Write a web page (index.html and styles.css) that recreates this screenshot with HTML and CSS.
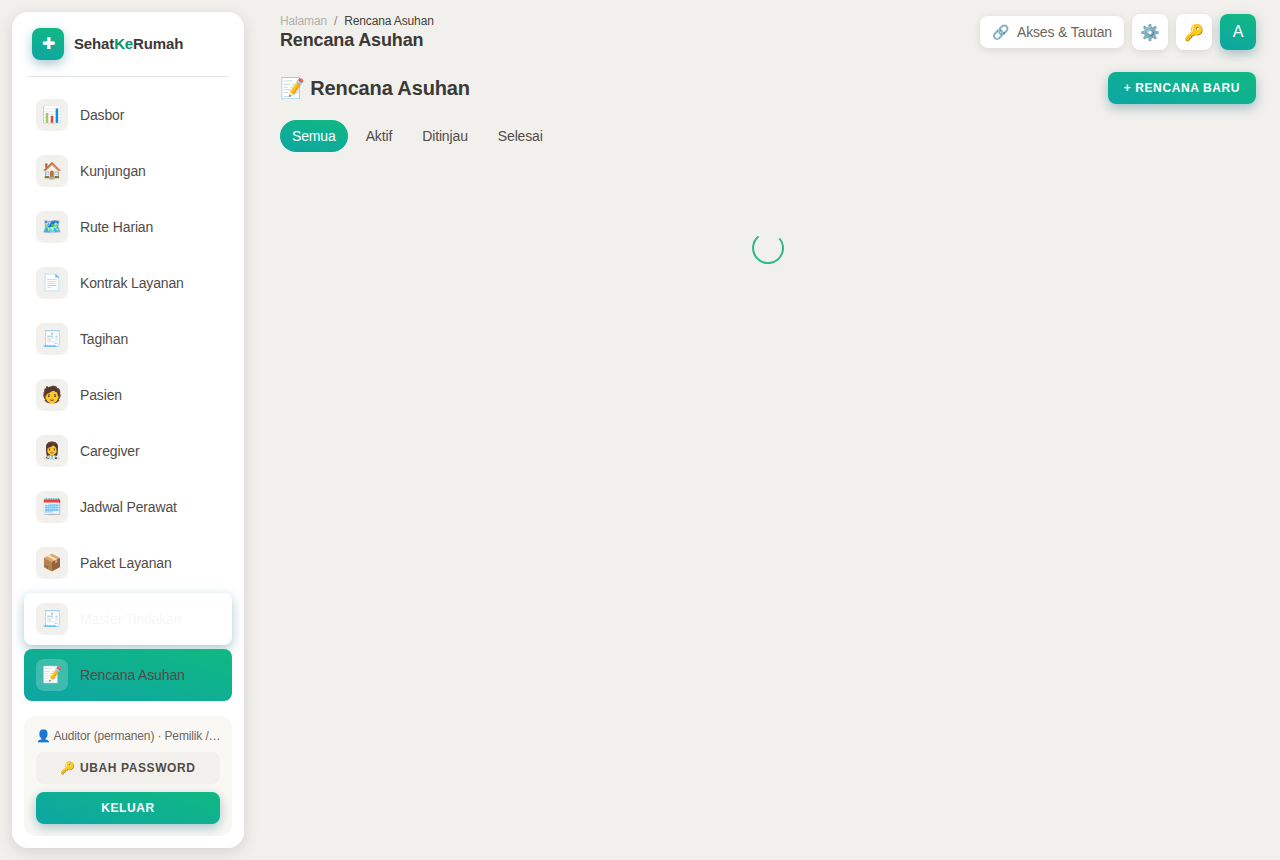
FILE: index.html
```html
<!DOCTYPE html>
<html lang="id">
<head>
    <meta charset="UTF-8">
    <meta name="viewport" content="width=device-width, initial-scale=1.0">
    <title>Rencana Asuhan - SehatKeRumah</title>
    <link rel="stylesheet" href="styles.css">
</head>
<body>

    <aside class="sidebar">
        <div class="brand">
            <span class="brand-logo">✚</span>
            <span class="brand-name">Sehat<span class="brand-accent">Ke</span>Rumah</span>
        </div>

        <nav class="menu">
            <a href="#dasbor" class="menu-item"><span class="menu-icon">📊</span>Dasbor</a>
            <a href="#kunjungan" class="menu-item"><span class="menu-icon">🏠</span>Kunjungan</a>
            <a href="#rute" class="menu-item"><span class="menu-icon">🗺️</span>Rute Harian</a>
            <a href="#kontrak" class="menu-item"><span class="menu-icon">📄</span>Kontrak Layanan</a>
            <a href="#tagihan" class="menu-item"><span class="menu-icon">🧾</span>Tagihan</a>
            <a href="#pasien" class="menu-item"><span class="menu-icon">🧑</span>Pasien</a>
            <a href="#caregiver" class="menu-item"><span class="menu-icon">👩‍⚕️</span>Caregiver</a>
            <a href="#jadwal" class="menu-item"><span class="menu-icon">🗓️</span>Jadwal Perawat</a>
            <a href="#paket" class="menu-item"><span class="menu-icon">📦</span>Paket Layanan</a>
            <a href="#tindakan" class="menu-item leaving"><span class="menu-icon">🧾</span>Master Tindakan</a>
            <a href="#rencana" class="menu-item active"><span class="menu-icon">📝</span>Rencana Asuhan</a>
        </nav>

        <div class="account">
            <div class="account-name">👤 Auditor (permanen) · Pemilik /…</div>
            <button class="btn btn-light">🔑 Ubah Password</button>
            <button class="btn btn-primary">Keluar</button>
        </div>
    </aside>

    <main class="content">
        <header class="topbar">
            <div>
                <div class="breadcrumb">
                    <a href="#halaman">Halaman</a>
                    <span class="separator">/</span>
                    <span>Rencana Asuhan</span>
                </div>
                <div class="topbar-title">Rencana Asuhan</div>
            </div>
            <div class="topbar-actions">
                <button class="link-button"><span>🔗</span><span>Akses &amp; Tautan</span></button>
                <button class="icon-button" aria-label="Pengaturan">⚙️</button>
                <button class="icon-button" aria-label="Ubah password">🔑</button>
                <button class="icon-button avatar" aria-label="Akun">A</button>
            </div>
        </header>

        <div class="page-head">
            <h1>📝 Rencana Asuhan</h1>
            <button class="btn btn-primary">+ Rencana Baru</button>
        </div>

        <div class="filters">
            <button class="filter selected">Semua</button>
            <button class="filter">Aktif</button>
            <button class="filter">Ditinjau</button>
            <button class="filter">Selesai</button>
        </div>

        <div class="loading">
            <svg class="spinner" viewBox="0 0 32 32" role="status" aria-label="Memuat">
                <path d="M6.5 4.5A15 15 0 1 0 27.4 6.3" />
            </svg>
        </div>
    </main>

</body>
</html>
```

FILE: styles.css
```css
* {
    box-sizing: border-box;
}

body {
    font-family: "Liberation Sans", Arial, sans-serif;
    font-size: 14px;
    line-height: 20px;
    letter-spacing: -0.01em;
    display: flex;
    min-height: 100vh;
    margin: 0;
    background: #f2f0ec;
    color: #44403c;
}

a {
    color: inherit;
    text-decoration: none;
}

button {
    font-family: inherit;
    letter-spacing: inherit;
    border: none;
    cursor: pointer;
}

/* Sidebar */
.sidebar {
    position: sticky;
    top: 12px;
    display: flex;
    flex-direction: column;
    flex-shrink: 0;
    width: 232px;
    height: calc(100vh - 24px);
    margin: 12px;
    padding: 0 12px 12px;
    background: #fff;
    border-radius: 16px;
    box-shadow: 0 4px 16px rgba(0, 0, 0, 0.12);
}

.brand {
    display: flex;
    align-items: center;
    gap: 10px;
    margin: 0 4px;
    padding: 16px 4px;
    border-bottom: 1px solid #dfe3e2;
}

.brand-logo {
    display: flex;
    align-items: center;
    justify-content: center;
    width: 32px;
    height: 32px;
    border-radius: 8px;
    background: linear-gradient(195deg, #10b981, #0ea5a4);
    box-shadow: 0 4px 12px rgba(14, 100, 120, 0.35);
    color: #fff;
    font-size: 16px;
}

.brand-name {
    font-size: 15px;
    font-weight: bold;
    color: #3b3835;
}

.brand-accent {
    color: #059669;
}

.menu {
    display: flex;
    flex-direction: column;
    flex: 1;
    gap: 4px;
    padding-top: 12px;
}

.menu-item {
    display: flex;
    align-items: center;
    gap: 12px;
    padding: 10px 12px;
    border-radius: 8px;
    color: #504b47;
}

.menu-icon {
    display: flex;
    align-items: center;
    justify-content: center;
    width: 32px;
    height: 32px;
    border-radius: 8px;
    background: #f2f0ec;
    font-size: 16px;
}

.menu-item.leaving {
    color: #f7f7f6;
    box-shadow: 0 4px 12px rgba(14, 100, 120, 0.35);
}

.menu-item.active {
    background: linear-gradient(195deg, #10b981, #0ea5a4);
}

.menu-item.active .menu-icon {
    background: rgba(255, 255, 255, 0.2);
}

.account {
    display: flex;
    flex-direction: column;
    gap: 8px;
    padding: 12px;
    border-radius: 12px;
    background: #faf8f5;
}

.account-name {
    font-size: 12px;
    line-height: 16px;
    color: #6b6560;
    white-space: nowrap;
}

/* Buttons */
.btn {
    height: 32px;
    padding: 0 16px;
    border-radius: 8px;
    font-size: 12px;
    font-weight: bold;
    letter-spacing: 0.05em;
    text-transform: uppercase;
}

.btn-primary {
    background: linear-gradient(195deg, #10b981, #0ea5a4);
    box-shadow: 0 4px 12px rgba(14, 100, 120, 0.35);
    color: #fff;
}

.btn-light {
    background: #f2f0ec;
    color: #504b47;
}

/* Content */
.content {
    flex: 1;
    min-width: 0;
    padding: 12px 24px 24px;
}

.topbar,
.page-head {
    display: flex;
    align-items: center;
    justify-content: space-between;
}

.topbar {
    height: 40px;
    margin-bottom: 20px;
}

.breadcrumb {
    display: flex;
    gap: 7px;
    font-size: 12px;
    line-height: 16px;
}

.breadcrumb a {
    color: #b3afaa;
}

.separator {
    color: #8a8580;
}

.topbar-title {
    font-size: 18px;
    line-height: 22px;
    font-weight: bold;
    color: #3b3835;
}

.topbar-actions {
    display: flex;
    align-items: center;
    gap: 8px;
}

.link-button,
.icon-button {
    display: flex;
    align-items: center;
    justify-content: center;
    background: #fff;
    border-radius: 8px;
    box-shadow: 0 2px 8px rgba(0, 0, 0, 0.1);
}

.link-button {
    gap: 8px;
    height: 32px;
    padding: 0 12px;
    font-size: 14px;
    color: #6b6560;
}

.icon-button {
    width: 36px;
    height: 36px;
    padding: 0;
    font-size: 16px;
}

.avatar {
    background: linear-gradient(195deg, #10b981, #0ea5a4);
    box-shadow: 0 4px 12px rgba(14, 100, 120, 0.35);
    color: #fff;
}

.page-head h1 {
    margin: 0;
    font-size: 20px;
    line-height: 28px;
    color: #3b3835;
}

.filters {
    display: flex;
    gap: 6px;
    margin-top: 16px;
}

.filter {
    height: 32px;
    padding: 0 12px;
    border-radius: 16px;
    background: transparent;
    font-size: 14px;
    color: #504b47;
}

.filter.selected {
    background: linear-gradient(195deg, #10b981, #0ea5a4);
    color: #fff;
}

.loading {
    display: flex;
    justify-content: center;
    padding: 80px 0;
}

.spinner {
    width: 32px;
    height: 32px;
    fill: none;
    stroke: #2abb86;
    stroke-width: 2;
}
```
